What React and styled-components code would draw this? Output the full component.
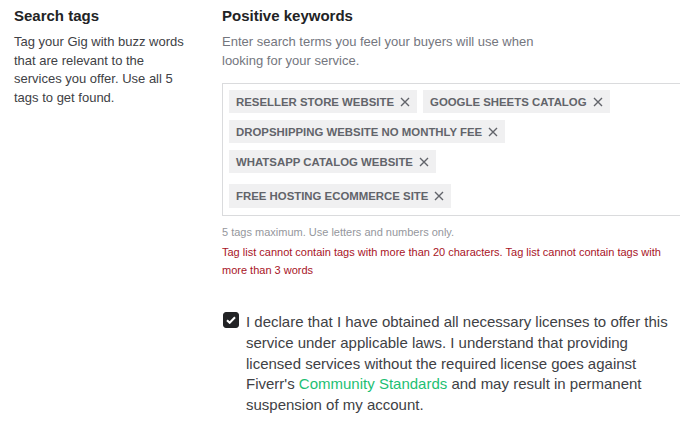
import React, { useState } from "react";
import styled, { createGlobalStyle } from "styled-components";

const GlobalStyle = createGlobalStyle`
  html, body {
    margin: 0;
    padding: 0;
    background: #fff;
    overflow: hidden;
  }
  body {
    font-family: "Liberation Sans", Arial, sans-serif;
    -webkit-font-smoothing: antialiased;
  }
`;

const tags = [
  "reseller store website",
  "google sheets catalog",
  "dropshipping website no monthly fee",
  "whatsapp catalog website",
];

const pending = "free hosting ecommerce site";

const Page = styled.div`
  display: grid;
  grid-template-columns: 176px 470px;
  column-gap: 32px;
  padding: 6px 0 0 14px;
  width: 700px;
`;

const Heading = styled.h3`
  margin: 0 0 7px;
  font-size: 15px;
  line-height: 20px;
  font-weight: 700;
  color: #222325;
`;

const SideText = styled.p`
  margin: 0;
  font-size: 13px;
  line-height: 18.5px;
  color: #404145;
`;

const Hint = styled.p`
  margin: 0 0 13px;
  width: 330px;
  font-size: 13px;
  line-height: 18.5px;
  color: #74767e;
`;

const TagBox = styled.div`
  display: flex;
  flex-wrap: wrap;
  align-items: flex-start;
  align-content: flex-start;
  padding: 6px 6px 7px;
  border: 1px solid #dadbdd;
  border-right: none;
`;

const InputRow = styled.div`
  flex: 0 0 100%;
  display: flex;
  margin-top: 4px;
`;

const Tag = styled.span`
  display: inline-flex;
  align-items: center;
  gap: 6px;
  height: ${(p) => (p.$tall ? 24 : 23)}px;
  margin: 0 6px ${(p) => (p.$tall ? 0 : 7)}px 0;
  padding: 0 7px;
  background: #f0f0f1;
  color: #62646a;
  font-size: 11.4px;
  font-weight: 700;
  text-transform: uppercase;
`;

const Remove = styled.svg`
  width: 10px;
  height: 10px;
  stroke: #62646a;
  stroke-width: 1.4;
  fill: none;
`;

const Note = styled.p`
  margin: ${(p) => (p.$first ? "10px" : "0")} 0 0;
  width: 458px;
  font-size: 11px;
  line-height: ${(p) => (p.$first ? "13px" : "18px")};
  color: ${(p) => (p.$error ? "#a8141f" : "#95979d")};
  padding-top: ${(p) => (p.$gap ? "4px" : "0")};
`;

const Declare = styled.label`
  display: flex;
  align-items: flex-start;
  gap: 7px;
  margin-top: 33px;
  width: 460px;
  cursor: pointer;
`;

const Box = styled.span`
  flex: none;
  display: flex;
  align-items: center;
  justify-content: center;
  width: 16px;
  height: 16px;
  margin: 0 0 0 1px;
  border-radius: 3px;
  background: ${(p) => (p.$checked ? "#222325" : "#fff")};
  border: 1px solid #222325;
  box-sizing: border-box;
`;

const DeclareText = styled.span`
  font-size: 15px;
  line-height: 20.75px;
  color: #404145;
`;

const Link = styled.a`
  color: #1dbf73;
  text-decoration: none;
`;

const Cross = () => (
  <Remove viewBox="0 0 10 10">
    <path d="M1 1L9 9M9 1L1 9" />
  </Remove>
);

export default function App() {
  const [checked, setChecked] = useState(true);
  return (
    <>
      <GlobalStyle />
      <Page>
        <div>
          <Heading>Search tags</Heading>
          <SideText>
            Tag your Gig with buzz words that are relevant to the services you
            offer. Use all 5 tags to get found.
          </SideText>
        </div>
        <div>
          <Heading>Positive keywords</Heading>
          <Hint>
            Enter search terms you feel your buyers will use when looking for
            your service.
          </Hint>
          <TagBox>
            {tags.map((t) => (
              <Tag key={t}>
                {t}
                <Cross />
              </Tag>
            ))}
            <InputRow>
              <Tag $tall>
                {pending}
                <Cross />
              </Tag>
            </InputRow>
          </TagBox>
          <Note $first>5 tags maximum. Use letters and numbers only.</Note>
          <Note $error $gap>
            Tag list cannot contain tags with more than 20 characters. Tag list
            cannot contain tags with more than 3 words
          </Note>
          <Declare onClick={() => setChecked((c) => !c)}>
            <Box $checked={checked}>
              {checked && (
                <svg width="10" height="8" viewBox="0 0 10 8">
                  <path
                    d="M1 4.2L3.7 6.8L9 1.2"
                    stroke="#fff"
                    strokeWidth="2"
                    fill="none"
                  />
                </svg>
              )}
            </Box>
            <DeclareText>
              I declare that I have obtained all necessary licenses to offer
              this service under applicable laws. I understand that providing
              licensed services without the required license goes against
              Fiverr's <Link href="#">Community Standards</Link> and may result
              in permanent suspension of my account.
            </DeclareText>
          </Declare>
        </div>
      </Page>
    </>
  );
}
